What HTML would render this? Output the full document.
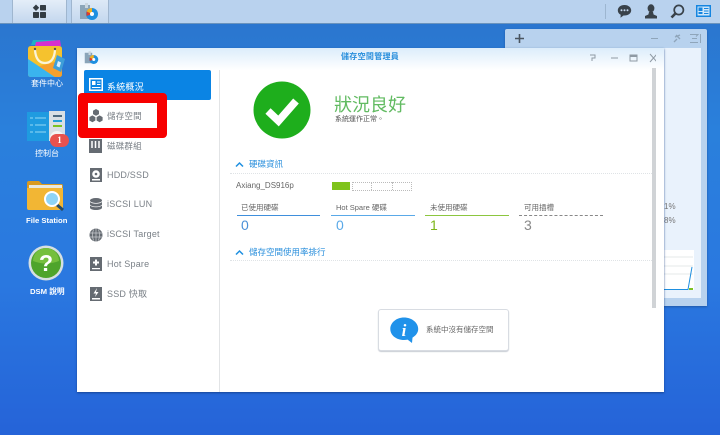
<!DOCTYPE html>
<html><head><meta charset="utf-8">
<style>
html,body{margin:0;padding:0;width:720px;height:435px;overflow:hidden;background:#2a78dc}
#w{position:relative;width:720px;height:435px;overflow:hidden;filter:blur(.3px);background:linear-gradient(180deg,#2b74cc 0,#2a80dc 30%,#2a78e0 65%,#2563d8 100%);font-family:"Liberation Sans","Noto Sans CJK TC",sans-serif}
.a{position:absolute}
.t{position:absolute;white-space:nowrap;line-height:1}
.nav{position:absolute;left:107px;font-size:9px;color:#7a8087;letter-spacing:.2px;white-space:nowrap;line-height:10px}
.ico{position:absolute;left:89px;width:14px;height:14px}
.lab{position:absolute;font-size:7.5px;color:#666;white-space:nowrap;line-height:9px}
.num{position:absolute;font-size:14px;line-height:14px}
.dl{position:absolute;left:230px;height:0;border-top:1px dotted #dfe3e6}
</style></head><body><div id="w">

<!-- taskbar -->
<div class="a" style="left:0;top:0;width:720px;height:23px;background:#b9d2ee;border-bottom:1px solid #6a93bd"></div>
<div class="a" style="left:12px;top:0;width:53px;height:23px;background:linear-gradient(#e4edf8,#c3d7ee);border:solid #9fb6cf;border-width:0 1px"></div>
<div class="a" style="left:71px;top:0;width:36px;height:23px;background:linear-gradient(#dde9f6,#c3d7ee);border:solid #9fb6cf;border-width:0 1px"></div>
<svg class="a" style="left:32px;top:4px" width="15" height="15" viewBox="0 0 15 15" fill="#333c44"><path d="M4 .5l3.200 3.200L4 7 .8 3.700z"/><rect x="8" y="1" width="6" height="5.500" rx=".7"/><rect x="1" y="8" width="6" height="6" rx=".7"/><rect x="8" y="8" width="6" height="6" rx=".7"/></svg>
<svg class="a" style="left:79px;top:3px" width="20" height="18" viewBox="0 0 20 18"><rect x="1" y="2" width="10" height="14" fill="#8aa4b8"/><path d="M6 0l3 0 0 5-3 0z" fill="#c9d5df"/><circle cx="13" cy="11" r="6" fill="#1e8fe0"/><path d="M13 11V5a6 6 0 0 0-5.500 3.500z" fill="#f0b020"/><path d="M13 11L7.500 8.500 7.500 13z" fill="#e23a2a"/><circle cx="13" cy="11" r="2" fill="#fff"/></svg>
<div class="a" style="left:605px;top:4px;width:1px;height:15px;background:#9db6d0"></div>
<svg class="a" style="left:617px;top:4px" width="15" height="15" viewBox="0 0 15 15"><path d="M7.500 1C3.600 1 .8 3.300.8 6.400c0 2 1.100 3.500 2.900 4.400l-.2 3 3-2.300h1c3.900 0 6.700-2.200 6.700-5.100S11.400 1 7.500 1z" fill="#39424a"/><circle cx="4.500" cy="6.300" r="1" fill="#c5d8ee"/><circle cx="7.500" cy="6.300" r="1" fill="#c5d8ee"/><circle cx="10.500" cy="6.300" r="1" fill="#c5d8ee"/></svg>
<svg class="a" style="left:644px;top:4px" width="14" height="15" viewBox="0 0 14 15" fill="#39424a"><ellipse cx="7" cy="4.300" rx="3.400" ry="4"/><path d="M5 8h4l.6 2.500 3.400 1.500v2.500H1V12l3.400-1.500z"/></svg>
<svg class="a" style="left:670px;top:4px" width="15" height="15" viewBox="0 0 15 15" fill="none" stroke="#39424a"><circle cx="8.800" cy="6" r="4.600" stroke-width="1.700"/><path d="M5.300 9.600L1.500 13.500" stroke-width="2.600"/></svg>
<svg class="a" style="left:696px;top:5px" width="15" height="13" viewBox="0 0 15 13"><rect width="15" height="12" fill="#1585e0"/><rect x="1.500" y="1.500" width="12" height="9" fill="#cfe6fa"/><rect x="2.500" y="2.500" width="4" height="3.500" fill="#1585e0"/><rect x="2.500" y="7" width="4" height="2" fill="#1585e0"/><path d="M8 3.500h4.500M8 6h4.500M8 8.500h4.500" stroke="#1585e0"/></svg>

<!-- desktop icons -->
<svg class="a" style="left:27px;top:39px" width="40" height="40" viewBox="0 0 40 40"><path d="M4 6L6 1h22l3 5z" fill="#1fb0c8"/><path d="M8 7l1-4 24-2 1 6z" fill="#d62fd0"/><path d="M1 10q0-3 3-3h28q3 0 3 3v25q0 3-3 3H4q-3 0-3-3z" fill="#f5c22e"/><path d="M1 20l27 18H4q-3 0-3-3z" fill="#3ab4ee"/><path d="M35 21v14q0 3-3 3h-4L12 27.300z" fill="#f6a02c"/><path d="M8 11q1 13 10 13t10-13" fill="none" stroke="#fbf4d8" stroke-width="2.200"/><circle cx="8" cy="10" r="1.200" fill="#555"/><circle cx="28" cy="10" r="1.200" fill="#555"/><path d="M30 16l8 4-4 13-8-4z" fill="#3e9fd8"/><path d="M31 22l3 1.500-1.500 5-3-1.500z" fill="#d7effb"/></svg>
<div class="t" style="left:31px;top:80px;font-size:8px;color:#fff">套件中心</div>
<svg class="a" style="left:27px;top:111px" width="38" height="31" viewBox="0 0 38 31"><rect y="1" width="22" height="29" fill="#1f9be0"/><path d="M3 7h3M8 7h11M3 14h3M8 14h11M3 21h3M8 21h11" stroke="#6fc4ee" stroke-width="1.500"/><rect x="22" width="16" height="30" fill="#d9dfe4"/><path d="M26 5h9" stroke="#4d6a7f" stroke-width="2"/><path d="M26 10h9" stroke="#20a0d8" stroke-width="2"/><path d="M26 15h9" stroke="#7cc223" stroke-width="2"/><circle cx="30" cy="27" r="7" fill="#f4f4f4"/></svg>
<div class="a" style="left:50px;top:134px;width:19px;height:13px;border-radius:7px;background:#e8524e;color:#fff;font:bold 9px/13px 'Liberation Serif',serif;text-align:center">1</div>
<div class="t" style="left:35px;top:150px;font-size:8px;color:#fff">控制台</div>
<svg class="a" style="left:27px;top:180px" width="39" height="34" viewBox="0 0 39 34"><path d="M0 3q0-2 2-2h10l3 3h19q2 0 2 2v22H0z" fill="#d99a20"/><rect x="2" y="5" width="33" height="6" fill="#e8e8e0"/><path d="M0 8h36v20q0 2-2 2H2q-2 0-2-2z" fill="#f2b634"/><path d="M29 24l7 6" stroke="#264a66" stroke-width="3"/><circle cx="25" cy="19" r="7" fill="#8fd4f6" stroke="#fff" stroke-width="2"/></svg>
<div class="t" style="left:26px;top:217px;font-size:7.700px;font-weight:bold;color:#fff">File Station</div>
<svg class="a" style="left:28px;top:245px" width="36" height="36" viewBox="0 0 36 36"><circle cx="18" cy="18" r="17.500" fill="#d5dfe2"/><circle cx="18" cy="18" r="15" fill="#4ea42c"/><path d="M5 16a13 13 0 0 1 26 0q-13 5-26 0z" fill="#75bf3e"/><text x="18" y="26" text-anchor="middle" font-family="Liberation Sans" font-weight="bold" font-size="23" fill="#fff">?</text></svg>
<div class="t" style="left:30px;top:288px;font-size:7.700px;font-weight:bold;color:#fff">DSM 說明</div>

<!-- widget -->
<div class="a" style="left:505px;top:29px;width:202px;height:277px;background:#b8d2ee;border-radius:2px 2px 0 0;box-shadow:0 1px 2px #1f58a8"></div>
<div class="a" style="left:650px;top:48px;width:51px;height:250px;background:#e9f2fc"></div>
<div class="a" style="left:664px;top:250px;width:30px;height:40px;background:#fff"></div>
<svg class="a" style="left:664px;top:250px" width="32" height="42"><path d="M0 7h29M0 16h29M0 24h29" stroke="#e4e8ea"/><path d="M0 39.500h24L28 17" fill="none" stroke="#1e8fe0"/><path d="M25 39h4" stroke="#7cc223" stroke-width="2"/></svg>
<div class="t" style="left:664px;top:203px;font-size:8px;color:#777">1%</div>
<div class="t" style="left:664px;top:217px;font-size:8px;color:#777">8%</div>
<svg class="a" style="left:514px;top:33px" width="11" height="11"><path d="M5.500 1v9M1 5.500h9" stroke="#4a5560" stroke-width="1.600"/></svg>
<svg class="a" style="left:650px;top:32px" width="60" height="12" fill="none" stroke="#8fa5ba"><path d="M1 6.500h7"/><path d="M24 10l3-3M26 3l4 4M25 5l5-2" stroke-width="1.400"/><path d="M40 2.500h8l-2 2M42 6.500h5M40 10.500h8M50.500 2v9"/></svg>

<!-- main window -->
<div class="a" style="left:77px;top:48px;width:587px;height:344px;background:#fff;box-shadow:0 1px 2px rgba(20,60,130,.8)"></div>
<div class="a" style="left:219px;top:48px;width:445px;height:2px;background:#1a84dc"></div>
<div class="a" style="left:77px;top:48px;width:587px;height:22px;background:linear-gradient(#dcedfb,#fff)"></div>
<div class="a" style="left:219px;top:70px;width:1px;height:322px;background:#e2e4e6"></div>
<svg class="a" style="left:84px;top:51px" width="15" height="14" viewBox="0 0 20 18"><rect x="1" y="2" width="10" height="14" fill="#8aa4b8"/><path d="M6 0l3 0 0 5-3 0z" fill="#c9d5df"/><circle cx="13" cy="11" r="6" fill="#1e8fe0"/><path d="M13 11V5a6 6 0 0 0-5.500 3.500z" fill="#f0b020"/><path d="M13 11L7.500 8.500 7.500 13z" fill="#e23a2a"/><circle cx="13" cy="11" r="2" fill="#fff"/></svg>
<div class="t" style="left:341px;top:53px;font-size:8px;font-weight:bold;color:#2a8fdc;letter-spacing:.3px">儲存空間管理員</div>
<svg class="a" style="left:586px;top:51px" width="70" height="14" fill="none" stroke="#8f9aa4"><path d="M4 4h5v3H6v3"/><path d="M25 7h7"/><rect x="44" y="4" width="7" height="6"/><path d="M44 5h7" stroke-width="2"/><path d="M64 3l7 8M71 3l-7 8"/></svg>
<div class="a" style="left:652px;top:68px;width:4px;height:240px;background:#d0d3d6"></div>

<!-- sidebar -->
<div class="a" style="left:84px;top:70px;width:127px;height:30px;background:#0a84e4;border-radius:2px"></div>
<svg class="ico" style="top:78px" viewBox="0 0 14 14"><rect width="14" height="13" fill="#fff"/><rect x="1.500" y="1.500" width="11" height="10" fill="#0a84e4"/><rect x="3" y="3" width="3.500" height="4" fill="#fff"/><path d="M8 4h3.500M8 6.500h3.500M3 9.500h8.500" stroke="#fff"/></svg>
<div class="nav" style="top:82px;color:#fff">系統概況</div>

<svg class="ico" style="top:109px" viewBox="0 0 14 14" fill="#656b72"><path d="M7 0l3 1.700v3.400L7 6.800 4 5.100V1.700z"/><path d="M3.400 6.400l3 1.700v3.400l-3 1.700-3-1.700V8.100z"/><path d="M10.600 6.400l3 1.700v3.400l-3 1.700-3-1.700V8.100z"/></svg>
<div class="nav" style="top:111px;font-size:8.500px">儲存空間</div>

<svg class="ico" style="top:139px" viewBox="0 0 14 14" fill="#656b72"><rect x="0" y="0" width="13" height="14"/><path d="M3 2v7M6.500 2v7M10 2v7" stroke="#fff" stroke-width="1.500"/></svg>
<div class="nav" style="top:141px;font-size:8.500px">磁碟群組</div>

<svg class="ico" style="top:168px" viewBox="0 0 14 14"><rect x="1" width="12" height="14" fill="#656b72"/><circle cx="7" cy="6" r="3.800" fill="#fff"/><circle cx="7" cy="6" r="1.300" fill="#656b72"/><rect x="3" y="11" width="8" height="1.500" fill="#fff"/></svg>
<div class="nav" style="top:170px">HDD/SSD</div>

<svg class="ico" style="top:198px" viewBox="0 0 14 14" fill="#656b72"><ellipse cx="7" cy="2.500" rx="6" ry="2.500"/><path d="M1 4v2.200c0 1.300 2.700 2.300 6 2.300s6-1 6-2.300V4c-1 1-3.400 1.700-6 1.700S2 5 1 4z"/><path d="M1 7.500v2.200c0 1.300 2.700 2.300 6 2.300s6-1 6-2.300V7.500C12 8.500 9.600 9.200 7 9.200S2 8.500 1 7.500z"/></svg>
<div class="nav" style="top:199px">iSCSI LUN</div>

<svg class="ico" style="top:228px" viewBox="0 0 14 14" fill="none"><circle cx="7" cy="7" r="6.500" fill="#656b72"/><path d="M1 5h12M1 9h12M7 .5v13M4.500 1.500q-2 5.500 0 11M9.500 1.500q2 5.500 0 11" stroke="#c9ccd0" stroke-width=".7"/></svg>
<div class="nav" style="top:229px">iSCSI Target</div>

<svg class="ico" style="top:257px" viewBox="0 0 14 14"><rect x="1" width="12" height="14" fill="#656b72"/><path d="M7 2.500v6M4 5.500h6" stroke="#fff" stroke-width="2"/><rect x="3" y="11" width="8" height="1.200" fill="#fff"/></svg>
<div class="nav" style="top:259px">Hot Spare</div>

<svg class="ico" style="top:287px" viewBox="0 0 14 14"><rect x="1" width="12" height="14" fill="#656b72"/><path d="M8 1L4.500 6.500H7L6 10l3.500-5H7z" fill="#fff"/><rect x="3" y="11" width="8" height="1.500" fill="#fff"/></svg>
<div class="nav" style="top:289px">SSD 快取</div>

<!-- red highlight -->
<div class="a" style="left:78px;top:93px;width:69px;height:25px;border:10px solid #f70000;border-radius:4px"></div>

<!-- status -->
<svg class="a" style="left:253px;top:81px" width="58" height="58" viewBox="0 0 58 58"><circle cx="29" cy="29" r="28.500" fill="#1eae1c"/><path d="M15 30l10.500 10L43 20" fill="none" stroke="#fff" stroke-width="7.500"/></svg>
<div class="t" style="left:334px;top:96px;font-size:18px;color:#62bb62">狀況良好</div>
<div class="t" style="left:335px;top:116px;font-size:7px;color:#555">系統運作正常。</div>

<!-- sections -->
<svg class="a" style="left:235px;top:161px" width="9" height="7"><path d="M1 5.500l3.500-3.500L8 5.500" fill="none" stroke="#1e8fe0" stroke-width="1.500"/></svg>
<div class="t" style="left:249px;top:160px;font-size:8.500px;color:#2a8fdc">硬碟資訊</div>
<div class="dl" style="top:173px;width:422px"></div>
<div class="t" style="left:236px;top:182px;font-size:8px;color:#666">Axiang_DS916p</div>
<div class="a" style="left:332px;top:182px;width:18px;height:8px;background:#7fc31c"></div>
<div class="a" style="left:352px;top:182px;width:58px;height:7px;border:1px dotted #bbb"></div>
<div class="a" style="left:371px;top:182px;width:0;height:8px;border-left:1px dotted #bbb"></div>
<div class="a" style="left:392px;top:182px;width:0;height:8px;border-left:1px dotted #bbb"></div>

<div class="lab" style="left:241px;top:203px">已使用硬碟</div>
<div class="a" style="left:237px;top:215px;width:83px;height:1px;background:#3f8fdc"></div>
<div class="num" style="left:241px;top:218px;color:#4a90d8">0</div>
<div class="lab" style="left:336px;top:203px">Hot Spare 硬碟</div>
<div class="a" style="left:331px;top:215px;width:84px;height:1px;background:#5aa9e8"></div>
<div class="num" style="left:336px;top:218px;color:#5aa9e8">0</div>
<div class="lab" style="left:430px;top:203px">未使用硬碟</div>
<div class="a" style="left:425px;top:215px;width:84px;height:1px;background:#8cc63f"></div>
<div class="num" style="left:430px;top:218px;color:#7cb518">1</div>
<div class="lab" style="left:524px;top:203px">可用插槽</div>
<div class="a" style="left:519px;top:215px;width:84px;height:0;border-top:1px dashed #888"></div>
<div class="num" style="left:524px;top:218px;color:#888">3</div>

<svg class="a" style="left:235px;top:249px" width="9" height="7"><path d="M1 5.500l3.500-3.500L8 5.500" fill="none" stroke="#1e8fe0" stroke-width="1.500"/></svg>
<div class="t" style="left:249px;top:248px;font-size:8.500px;color:#2a8fdc">儲存空間使用率排行</div>
<div class="dl" style="top:260px;width:422px"></div>

<!-- empty message -->
<div class="a" style="left:378px;top:309px;width:129px;height:40px;background:#fff;border:1px solid #d8dce2;border-radius:3px;box-shadow:0 1px 1px #c8ccd4"></div>
<svg class="a" style="left:390px;top:317px" width="29" height="27" viewBox="0 0 29 27"><path d="M14 .5C6.500.5.300 5.500.300 12c0 6.300 6 11 13.700 11 1.300 0 2.500-.1 3.600-.4L22 26l.5-5.400c3.400-2 5.700-5 5.700-8.600C28.200 5.500 21.700.5 14 .5z" fill="#2092ea"/><text x="14" y="19" text-anchor="middle" font-family="Liberation Serif" font-style="italic" font-weight="bold" font-size="17" fill="#fff">i</text></svg>
<div class="t" style="left:426px;top:326px;font-size:7.500px;color:#666">系統中沒有儲存空間</div>

</div></body></html>
